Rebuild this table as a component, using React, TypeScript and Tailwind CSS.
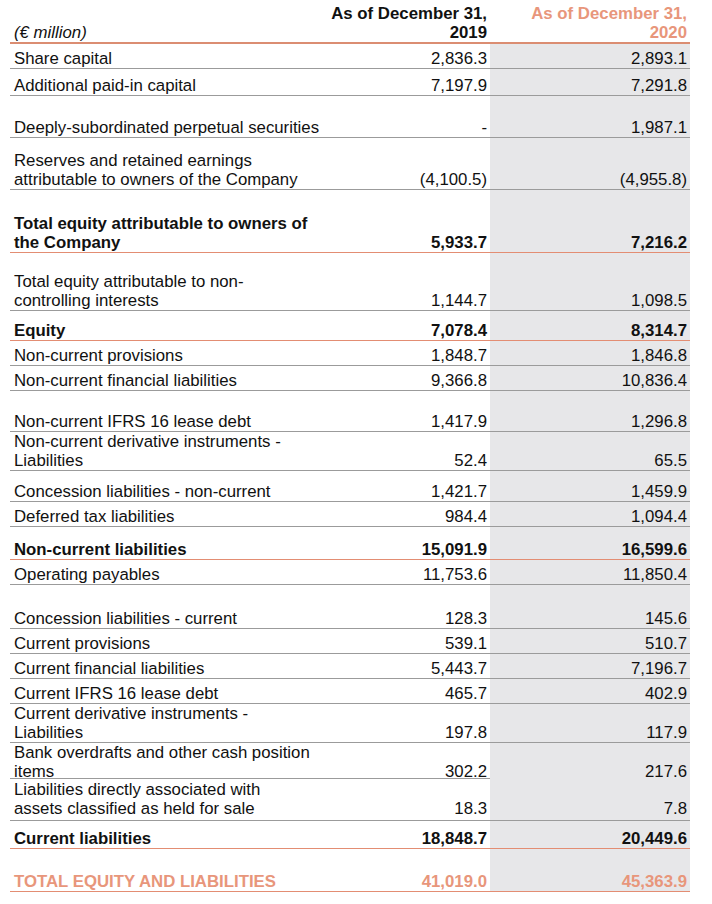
import React from "react";

type Row = {
  label: React.ReactNode;
  y2019: string;
  y2020: string;
  h: string;
  total?: boolean;
  grand?: boolean;
  labelTop?: boolean;
  pb?: string;
};

const rows: Row[] = [
  { label: "Share capital", y2019: "2,836.3", y2020: "2,893.1", h: "h-[25px]" },
  { label: "Additional paid-in capital", y2019: "7,197.9", y2020: "7,291.8", h: "h-[27px]" },
  { label: "Deeply-subordinated perpetual securities", y2019: "-", y2020: "1,987.1", h: "h-[42px]" },
  {
    label: (
      <>
        Reserves and retained earnings
        <br />
        attributable to owners of the Company
      </>
    ),
    y2019: "(4,100.5)",
    y2020: "(4,955.8)",
    h: "h-[52px]",
  },
  {
    label: (
      <>
        Total equity attributable to owners of
        <br />
        the Company
      </>
    ),
    y2019: "5,933.7",
    y2020: "7,216.2",
    h: "h-[63px]",
    total: true,
  },
  {
    label: (
      <>
        Total equity attributable to non-
        <br />
        controlling interests
      </>
    ),
    y2019: "1,144.7",
    y2020: "1,098.5",
    h: "h-[58px]",
  },
  { label: "Equity", y2019: "7,078.4", y2020: "8,314.7", h: "h-[30px]", total: true },
  { label: "Non-current provisions", y2019: "1,848.7", y2020: "1,846.8", h: "h-[25px]" },
  { label: "Non-current financial liabilities", y2019: "9,366.8", y2020: "10,836.4", h: "h-[25px]" },
  { label: "Non-current IFRS 16 lease debt", y2019: "1,417.9", y2020: "1,296.8", h: "h-[41px]" },
  {
    label: (
      <>
        Non-current derivative instruments -
        <br />
        Liabilities
      </>
    ),
    y2019: "52.4",
    y2020: "65.5",
    h: "h-[39px]",
  },
  { label: "Concession liabilities - non-current", y2019: "1,421.7", y2020: "1,459.9", h: "h-[31px]" },
  { label: "Deferred tax liabilities", y2019: "984.4", y2020: "1,094.4", h: "h-[25px]" },
  { label: "Non-current liabilities", y2019: "15,091.9", y2020: "16,599.6", h: "h-[33px]", total: true },
  { label: "Operating payables", y2019: "11,753.6", y2020: "11,850.4", h: "h-[25px]" },
  { label: "Concession liabilities - current", y2019: "128.3", y2020: "145.6", h: "h-[44px]" },
  { label: "Current provisions", y2019: "539.1", y2020: "510.7", h: "h-[25px]" },
  { label: "Current financial liabilities", y2019: "5,443.7", y2020: "7,196.7", h: "h-[25px]" },
  { label: "Current IFRS 16 lease debt", y2019: "465.7", y2020: "402.9", h: "h-[25px]" },
  {
    label: (
      <>
        Current derivative instruments -
        <br />
        Liabilities
      </>
    ),
    y2019: "197.8",
    y2020: "117.9",
    h: "h-[39px]",
  },
  {
    label: (
      <>
        Bank overdrafts and other cash position
        <br />
        items
      </>
    ),
    y2019: "302.2",
    y2020: "217.6",
    h: "h-[36px]",
    labelTop: true,
  },
  {
    label: (
      <>
        Liabilities directly associated with
        <br />
        assets classified as held for sale
      </>
    ),
    y2019: "18.3",
    y2020: "7.8",
    h: "h-[42px]",
    pb: "pb-[2px]",
  },
  { label: "Current liabilities", y2019: "18,848.7", y2020: "20,449.6", h: "h-[28px]", total: true },
  {
    label: "TOTAL EQUITY AND LIABILITIES",
    y2019: "41,019.0",
    y2020: "45,363.9",
    h: "h-[43px]",
    total: true,
    grand: true,
  },
];

export default function App() {
  return (
    <div className="min-h-screen bg-white font-['Liberation_Sans',Arial,sans-serif] text-[16.8px] leading-[19px] text-[#111]">
      <div className="ml-[10px] w-[680px]">
        <div className="grid h-[44px] grid-cols-[320px_160px_200px] items-end border-b-2 border-[#db8d72] font-bold">
          <div className="pl-[4px] font-normal italic">(€ million)</div>
          <div className="pr-[3px] text-right">
            As of December 31,
            <br />
            2019
          </div>
          <div className="pr-[3px] text-right text-[#e8967b]">
            As of December 31,
            <br />
            2020
          </div>
        </div>

        {rows.map((r, i) => (
          <div
            key={i}
            className={`grid grid-cols-[320px_160px_200px] border-b ${r.h} ${
              r.total ? "border-[#e38d73] font-bold" : "border-[#9b9b9b]"
            } ${r.grand ? "text-[#e8967b]" : ""}`}
          >
            <div
              className={`flex whitespace-nowrap pl-[4px] ${r.labelTop ? "items-start" : "items-end"} ${
                r.labelTop ? "" : r.pb ?? ""
              }`}
            >
              <div>{r.label}</div>
            </div>
            <div className={`flex items-end justify-end pr-[3px] ${r.pb ?? ""}`}>{r.y2019}</div>
            <div className={`flex items-end justify-end bg-[#e7e7e9] pr-[3px] ${r.pb ?? ""}`}>{r.y2020}</div>
          </div>
        ))}
      </div>
    </div>
  );
}
